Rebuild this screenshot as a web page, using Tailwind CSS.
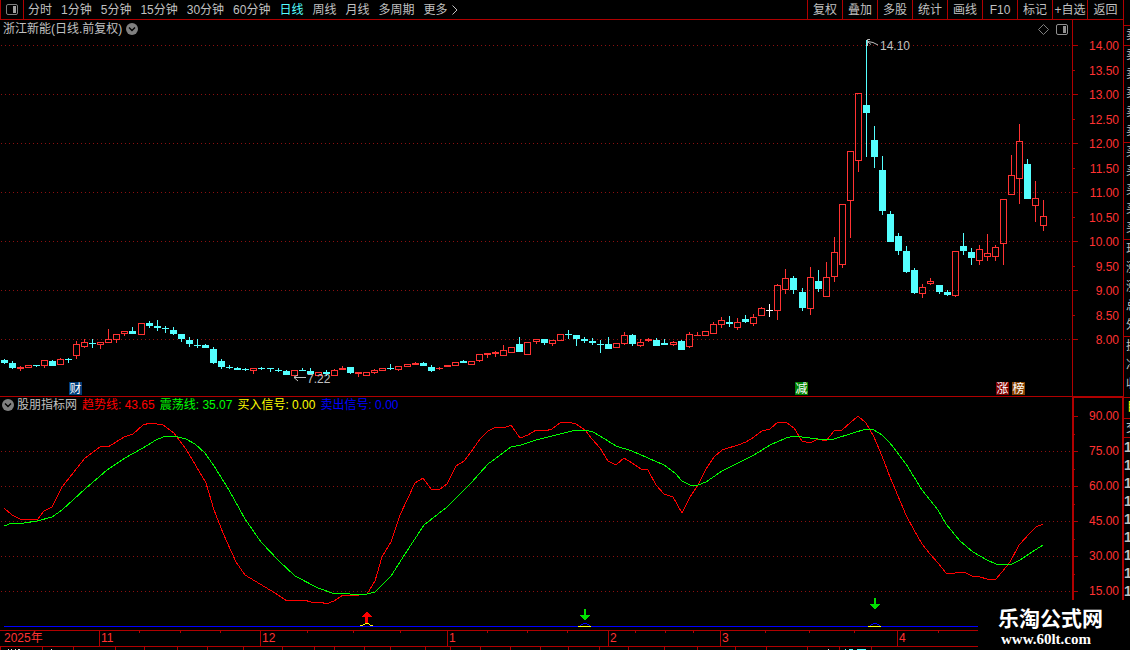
<!DOCTYPE html>
<html lang="zh-CN">
<head>
    <meta charset="utf-8" />
    <meta name="viewport" content="width=device-width, initial-scale=1.0">
    <title>浙江新能 | 日线</title>
    <script src="https://cdn.jsdelivr.net/npm/@tailwindcss/browser@4"></script>
</head>
<body class="relative flex min-h-screen overflow-hidden bg-black font-['Liberation_Sans','Noto_Sans_CJK_SC',sans-serif] text-xs text-[#c0c0c0]">

    <main class="min-w-0 flex-1">

        <!-- Toolbar -->
        <header class="flex h-5 justify-between border-b border-[#b00000]">
            <div class="flex items-stretch">
                <button class="flex w-6 items-center justify-center border-x border-[#b00000]" aria-label="侧栏">
                    <svg width="12" height="11" viewBox="0 0 12 11">
                        <rect x="0.5" y="0.5" width="11" height="10" rx="1.5" fill="none" stroke="#808080"/>
                        <rect x="7" y="2" width="3" height="7" fill="#a0a0a0"/>
                    </svg>
                </button>
                <nav class="ml-1 flex gap-[9px] whitespace-nowrap leading-[18px]">
                    <button>分时</button>
                    <button>1分钟</button>
                    <button>5分钟</button>
                    <button>15分钟</button>
                    <button>30分钟</button>
                    <button>60分钟</button>
                    <button class="text-[#54ffff]">日线</button>
                    <button>周线</button>
                    <button>月线</button>
                    <button>多周期</button>
                    <button class="flex items-center gap-1">更多
                        <svg width="6" height="10" viewBox="0 0 6 10"><path d="M0.5 0.5 L5 5 L0.5 9.5" fill="none" stroke="#c0c0c0"/></svg>
                    </button>
                </nav>
            </div>
            <nav class="flex whitespace-nowrap leading-[18px]">
                <button class="w-[35px] border-l border-[#b00000]">复权</button>
                <button class="w-[35px] border-l border-[#b00000]">叠加</button>
                <button class="w-[35px] border-l border-[#b00000]">多股</button>
                <button class="w-[35px] border-l border-[#b00000]">统计</button>
                <button class="w-[35px] border-l border-[#b00000]">画线</button>
                <button class="w-[35px] border-l border-[#b00000]">F10</button>
                <button class="w-[35px] border-l border-[#b00000]">标记</button>
                <button class="w-[35px] border-l border-[#b00000]">+自选</button>
                <button class="w-9 border-l border-[#b00000]">返回</button>
            </nav>
        </header>

        <!-- Price panel -->
        <section class="flex h-[377px] border-b border-[#b00000]">
            <div class="relative min-w-0 flex-1">
                <svg class="h-[376px] w-full" viewBox="0 20 1072 376" preserveAspectRatio="none">
                    <path d="M1 45.5H1072M1 94.5H1072M1 143.5H1072M1 192.5H1072M1 241.5H1072M1 290.5H1072M1 339.5H1072" stroke="#8c1010" stroke-dasharray="1 3" shape-rendering="crispEdges"/>
                    <g id="candles" shape-rendering="crispEdges"></g>

                    <!-- High / low marks -->
                    <g fill="none" stroke="#c0c0c0">
                        <path d="M870 39.5H867.5V46M868 41.5L873 42.5L878 45M868 42L871 44.5"/>
                        <path d="M294 377.5H306M294 377L298 375M294 377.5L298 381"/>
                    </g>
                    <text x="880" y="50" font-size="12" fill="#c0c0c0">14.10</text>
                    <text x="307" y="383" font-size="12" fill="#c0c0c0">7.22</text>

                    <!-- Event flags -->
                    <g font-size="12" fill="#fff" text-anchor="middle">
                        <rect x="69" y="382" width="13" height="13" fill="#003c78"/><text x="75.5" y="393">财</text>
                        <rect x="795" y="382" width="13" height="13" fill="#008000"/><text x="801.5" y="393">减</text>
                        <rect x="996" y="382" width="13" height="13" fill="#800000"/><text x="1002.5" y="393">涨</text>
                        <rect x="1012" y="382" width="13" height="13" fill="#844000"/><text x="1018.5" y="393">榜</text>
                    </g>
                </svg>
                <div class="absolute top-0 left-0 flex w-full items-center justify-between pt-px pr-1 pl-[3px]">
                    <div class="flex items-center gap-1 leading-4">
                        <h1>浙江新能(日线.前复权)</h1>
                        <button aria-label="展开">
                            <svg width="12" height="12" viewBox="0 0 12 12"><circle cx="6" cy="6" r="6" fill="#808080"/><path d="M3 4.5L6 7.5L9 4.5" fill="none" stroke="#000" stroke-width="1.4"/></svg>
                        </button>
                    </div>
                    <div class="flex items-center gap-[7px]">
                        <svg width="11" height="11" viewBox="0 0 11 11"><path d="M5.5 0.5L10.5 5.5L5.5 10.5L0.5 5.5Z" fill="none" stroke="#808080"/></svg>
                        <svg width="12" height="11" viewBox="0 0 12 11"><rect x="0.5" y="0.5" width="11" height="10" rx="1.5" fill="none" stroke="#909090"/><rect x="7" y="2" width="3" height="7" fill="#909090"/></svg>
                    </div>
                </div>
            </div>
            <div class="flex w-[51px] border-l border-[#b00000]">
                <svg class="shrink-0" width="6" height="376" viewBox="0 20 6 376" shape-rendering="crispEdges">
                    <path d="M0 45.5H5M0 94.5H5M0 143.5H5M0 192.5H5M0 241.5H5M0 290.5H5M0 339.5H5M0 70.5H2M0 119.5H2M0 168.5H2M0 217.5H2M0 266.5H2M0 315.5H2" stroke="#b00000"/>
                </svg>
                <div class="mt-[14px] flex h-[318px] flex-1 flex-col justify-between pr-1 text-right leading-6 text-[#ff3232]">
                    <span>14.00</span>
                    <span>13.50</span>
                    <span>13.00</span>
                    <span>12.50</span>
                    <span>12.00</span>
                    <span>11.50</span>
                    <span>11.00</span>
                    <span>10.50</span>
                    <span>10.00</span>
                    <span>9.50</span>
                    <span>9.00</span>
                    <span>8.50</span>
                    <span>8.00</span>
                </div>
            </div>
        </section>

        <!-- Indicator panel -->
        <section class="flex h-[233px]">
            <div class="relative min-w-0 flex-1">
                <svg class="h-[233px] w-full" viewBox="0 397 1072 233" preserveAspectRatio="none" shape-rendering="crispEdges">
                    <path d="M1 451.5H1072M1 486.5H1072M1 521.5H1072M1 556.5H1072M1 591.5H1072" stroke="#8c1010" stroke-dasharray="1 3"/>
                    <path d="M4 626.5H1072" stroke="#0000ff" stroke-width="1"/>
                    <polyline fill="none" stroke="#ff0000" points="4,508 12,515 20,519 37,520 44,511 52,507 62,487 85,458 92,453 101,446 108,447 124,437 133,434 143,425 150,423 163,425 174,433 186,449 206,483 214,510 223,533 236,562 245,575 275,593 287,601 304,600 311,602 321,602 326,604 334,601 343,595 352,596 367,594 375,581 382,557 391,542 400,515 415,483 423,478 431,489 439,490 447,484 456,466 464,461 471,452 480,439 488,431 496,427 504,428 511,425 520,438 528,435 536,430 545,431 552,429 560,423 568,422 576,424 585,430 592,439 600,448 608,461 616,465 624,458 632,463 641,469 648,470 656,485 664,494 673,497 682,513 690,497 698,485 706,469 714,457 722,450 738,445 746,442 754,437 762,431 770,429 778,422 786,422 794,428 802,441 810,443 818,439 826,441 834,431 842,430 850,423 858,416 866,423 874,437 882,456 890,477 898,496 906,515 914,530 922,544 930,554 938,563 946,573 955,573 964,572 972,576 980,577 987,579 996,579 1002,572 1010,562 1019,545 1030,533 1036,527 1043,524"/>
                    <polyline fill="none" stroke="#00ff00" points="4,526 12,523 24,523 37,521 52,517 62,510 85,489 107,470 125,458 143,448 156,440 163,437 174,436 186,439 195,444 205,453 214,466 229,490 245,519 261,542 279,561 295,576 318,588 332,593 350,594 367,594 375,592 391,576 405,554 424,525 447,507 471,483 488,464 511,447 521,445 536,440 560,434 568,432 576,430 585,430 593,432 600,436 616,446 632,451 648,458 664,465 675,473 682,481 690,485 698,485 706,482 722,471 738,463 754,455 770,445 786,438 794,436 802,437 818,439 834,439 850,434 866,429 874,430 882,435 890,443 906,464 922,490 938,510 946,524 960,541 973,552 987,560 996,564 1005,565 1012,564 1020,560 1032,552 1043,545"/>

                    <!-- Buy signal -->
                    <path d="M367 611L372 617H368V623H365V617H362Z" fill="#ff0000"/>
                    <path d="M360 625.5H362L366 623.5H368L371 625.5H373" fill="none" stroke="#ffff00"/>

                    <!-- Sell signals -->
                    <g fill="#00e000">
                        <path d="M584 609H586V615H590L585 621L580 615H584Z"/>
                        <path d="M874 598H876V604H880L875 610L870 604H874Z"/>
                    </g>
                    <path d="M580 625.5L584 623.5H586L590 625.5M870 625.5L874 623.5H876L880 625.5" fill="none" stroke="#0000ff"/>
                    <path d="M578 626.5H591M868 626.5H881" stroke="#ffff00"/>
                </svg>
                <div class="absolute top-0 left-0 flex items-center gap-[5px] pl-0.5 leading-4 whitespace-nowrap">
                    <div class="flex items-center gap-[3px]">
                        <button aria-label="展开指标">
                            <svg width="12" height="12" viewBox="0 0 12 12"><circle cx="6" cy="6" r="6" fill="#808080"/><path d="M3 4.5L6 7.5L9 4.5" fill="none" stroke="#000" stroke-width="1.4"/></svg>
                        </button>
                        <h2>股朋指标网</h2>
                    </div>
                    <span class="text-[#ff0000]">趋势线: 43.65</span>
                    <span class="text-[#00ff00]">震荡线: 35.07</span>
                    <span class="text-[#ffff00]">买入信号: 0.00</span>
                    <span class="text-[#0000ff]">卖出信号: 0.00</span>
                </div>
            </div>
            <div class="flex w-[51px] border-t border-r border-l-2 border-[#b00000]">
                <svg class="shrink-0" width="5" height="232" viewBox="0 398 5 232" shape-rendering="crispEdges">
                    <path d="M0 416.5H4M0 451.5H4M0 486.5H4M0 521.5H4M0 556.5H4M0 591.5H4M0 434.5H1M0 469.5H1M0 504.5H1M0 539.5H1M0 574.5H1" stroke="#b00000"/>
                </svg>
                <div class="flex flex-1 flex-col pt-px pr-[3px] text-right leading-[35px] text-[#ff3232]">
                    <span>90.00</span>
                    <span>75.00</span>
                    <span>60.00</span>
                    <span>45.00</span>
                    <span>30.00</span>
                    <span>15.00</span>
                </div>
            </div>
        </section>

        <!-- Time axis -->
        <section class="relative border-y border-[#b00000]">
            <div class="grid h-[15px] grid-cols-[99fr_161fr_187fr_161fr_112fr_177fr_226fr] leading-[15px] text-[#ff3232]">
                <span class="pl-1">2025年</span>
                <span class="border-l border-[#b00000] pl-px">11</span>
                <span class="border-l border-[#b00000] pl-px">12</span>
                <span class="border-l border-[#b00000] pl-px">1</span>
                <span class="border-l border-[#b00000] pl-px">2</span>
                <span class="border-l border-[#b00000] pl-px">3</span>
                <span class="border-l border-[#b00000] pl-px">4</span>
            </div>
            <svg class="absolute top-0 left-0 h-[2px] w-full" viewBox="0 0 1123 2" preserveAspectRatio="none" shape-rendering="crispEdges">
                <path d="M139.500 0V2M180.500 0V2M220.500 0V2M307.500 0V2M353.500 0V2M400.500 0V2M487.500 0V2M527.500 0V2M567.500 0V2M635.500 0V2M665.500 0V2M693.500 0V2M765.500 0V2M809.500 0V2M854.500 0V2M938.500 0V2" stroke="#b00000"/>
            </svg>
        </section>

        <!-- Top edge of the tab strip below -->
        <svg class="h-[3px] w-full" viewBox="0 0 1123 3" preserveAspectRatio="none" shape-rendering="crispEdges">
            <path d="M0.500 0V3M42.500 0V3M73.500 0V3M115.500 0V3M144.500 0V3M177.500 0V3M207.500 0V3M243.500 0V3M282.500 0V3M314.500 0V3M334.500 0V3M364.500 0V3M390.500 0V3M425.500 0V3M450.500 0V3M480.500 0V3M510.500 0V3M540.500 0V3M568.500 0V3M599.500 0V3M628.500 0V3M664.500 0V3M697.500 0V3M735.500 0V3M766.500 0V3M807.500 0V3M839.500 0V3M871.500 0V3" stroke="#b00000"/>
            <path d="M8 2.500H9M11 2.500H12M15 2.500H16M18 2.500H20M51 2.500H52M828 2.500H829" stroke="#e0e0e0"/>
            <path d="M845 2.500H846M849 2.500H853M857 2.500H866" stroke="#54ffff"/>
        </svg>
    </main>

    <!-- Quote column, cut by the window edge -->
    <aside class="h-[650px] w-[7px] overflow-hidden border-l border-[#b00000] pt-[25px] leading-[19px] whitespace-nowrap">
        <div class="h-5 border-t border-[#b00000] pl-0.5">卖</div>
        <div class="h-[97px] border-t border-[#b00000] pl-0.5">
            <p>卖五</p>
            <p>卖四</p>
            <p>卖三</p>
            <p>卖二</p>
            <p>卖一</p>
        </div>
        <div class="h-[97px] border-t border-[#b00000] pl-0.5">
            <p>买一</p>
            <p>买二</p>
            <p>买三</p>
            <p>买四</p>
            <p>买五</p>
        </div>
        <div class="h-[97px] border-t border-[#b00000] pl-0.5">
            <p>现价</p>
            <p>涨跌</p>
            <p>涨幅</p>
            <p>总量</p>
            <p>外盘</p>
        </div>
        <div class="h-[61px] border-t border-[#b00000] pl-0.5">
            <p>换手</p>
            <p>净资</p>
            <p>收益</p>
        </div>
        <div class="h-[21px] border-t border-[#b00000] pl-[3px] text-[#ffff00]">目</div>
        <div class="h-[19px] border-t border-[#b00000] pl-0.5">交</div>
        <div class="border-t border-[#b00000] text-sm leading-[18px] font-bold">
            <p>14:5</p>
            <p>14:5</p>
            <p>14:5</p>
            <p>14:5</p>
            <p>14:5</p>
            <p>14:5</p>
            <p>14:5</p>
            <p>14:5</p>
            <p>15:0</p>
        </div>
    </aside>

    <!-- Site mark -->
    <div class="absolute right-0 bottom-0 flex h-[50px] w-[152px] flex-col bg-black pt-1.5 pl-5 text-white">
        <span class="text-[21px] leading-[26px] font-bold">乐淘公式网</span>
        <a href="#" class="pl-[3px] font-['Liberation_Serif',serif] text-[15px] leading-3.5 font-bold">www.60lt.com</a>
    </div>

    <script>
        // type, body top, body bottom, high, low
        // r = hollow up, R = flat up, c = down, w = unchanged
        const bars = `
            c 360 363 359 364|c 363 368 361 369|R 367 369 366 371|r 365 368 365 368|c 365 366 365 367
            r 360 366 360 368|c 361 366 360 366|r 359 365 358 365|c 359 360 358 363|r 344 356 341 359
            r 342 347 339 348|c 343 344 339 348|r 342 345 342 349|r 339 343 329 343|r 334 340 334 343
            r 331 334 331 336|c 331 334 327 334|r 323 335 323 335|c 323 326 321 328|c 326 328 320 331
            c 328 329 326 333|c 330 334 327 335|c 334 339 334 342|c 340 344 337 347|c 345 346 339 348
            c 345 348 344 348|c 349 363 347 364|c 361 367 359 369|c 367 368 365 369|c 368 370 367 370
            c 369 370 368 371|r 368 371 368 374|c 368 369 367 370|c 368 369 368 372|c 370 371 368 372
            c 371 375 370 375|r 370 376 370 376|c 370 371 368 371|c 371 374 368 375|r 372 376 372 376
            c 372 374 370 376|r 370 376 369 376|R 368 370 366 370|c 367 373 367 374|R 372 374 372 377
            r 372 376 372 376|r 370 373 369 374|r 368 371 368 371|c 368 369 364 370|r 366 370 366 371
            r 364 367 364 367|R 363 365 362 365|c 363 366 362 366|c 367 371 365 372|R 368 369 367 370
            R 365 367 365 367|r 362 366 362 366|c 361 363 360 363|r 361 365 361 365|r 354 361 354 362
            R 353 355 353 358|R 352 354 351 357|r 350 356 345 356|r 347 353 347 353|c 344 352 337 352
            r 342 355 342 355|r 339 342 339 344|c 339 343 339 345|r 340 344 340 346|r 334 341 334 341
            c 334 335 330 339|c 335 339 335 346|c 339 341 337 343|c 341 343 338 345|c 344 345 340 353
            c 344 349 337 349|r 343 348 343 348|r 335 344 332 345|c 335 344 334 346|r 342 346 339 347
            R 339 341 338 342|c 340 346 338 346|c 343 345 339 345|r 342 345 341 346|c 341 350 340 350
            r 334 347 332 348|R 335 336 332 336|r 331 336 331 336|r 324 334 322 334|r 320 325 317 328
            c 322 324 316 327|r 322 328 318 330|c 319 322 315 323|r 317 324 314 326|r 308 316 307 316
            w 310 311 304 317|r 285 311 284 320|r 278 290 269 294|c 278 290 276 294|c 292 308 288 311
            r 277 309 267 315|c 281 289 270 292|r 277 297 262 297|r 252 277 237 282|r 204 265 204 268
            r 151 201 151 238|r 93 161 93 172|c 105 113 40 157|c 140 157 126 168|c 170 211 156 215
            c 214 242 211 242|c 236 251 233 255|c 251 272 246 273|c 270 293 268 294|r 287 294 284 298
            r 281 284 278 285|c 285 292 285 294|c 292 295 290 296|r 251 296 251 297|c 246 251 233 255
            c 252 258 248 265|r 249 261 245 265|r 253 257 234 261|r 247 257 245 261|r 199 244 199 265
            r 175 195 155 195|r 141 179 124 204|c 164 199 159 199|r 198 206 181 222|r 216 226 200 231`;
        const colors = { r: '#ff3232', R: '#ff3232', c: '#54ffff', w: '#ffffff' };

        document.getElementById('candles').innerHTML = bars.trim().split(/\||\n/).map((row, i) => {
            const [type, top, bottom, high, low] = row.trim().split(' ');
            const x = 4 + 8 * i + Math.floor(2 * i / 33);
            const color = colors[type];
            const body = type === 'r'
                ? `<rect x="${x - 2.5}" y="${+top + 0.5}" width="6" height="${bottom - top - 1}" fill="none" stroke="${color}"/>`
                : `<rect x="${x - 3}" y="${top}" width="7" height="${bottom - top}" fill="${color}"/>`;
            return `<path d="M${x + 0.5} ${high}V${top}M${x + 0.5} ${bottom}V${low}" stroke="${color}"/>` + body;
        }).join('');
    </script>
</body>
</html>
